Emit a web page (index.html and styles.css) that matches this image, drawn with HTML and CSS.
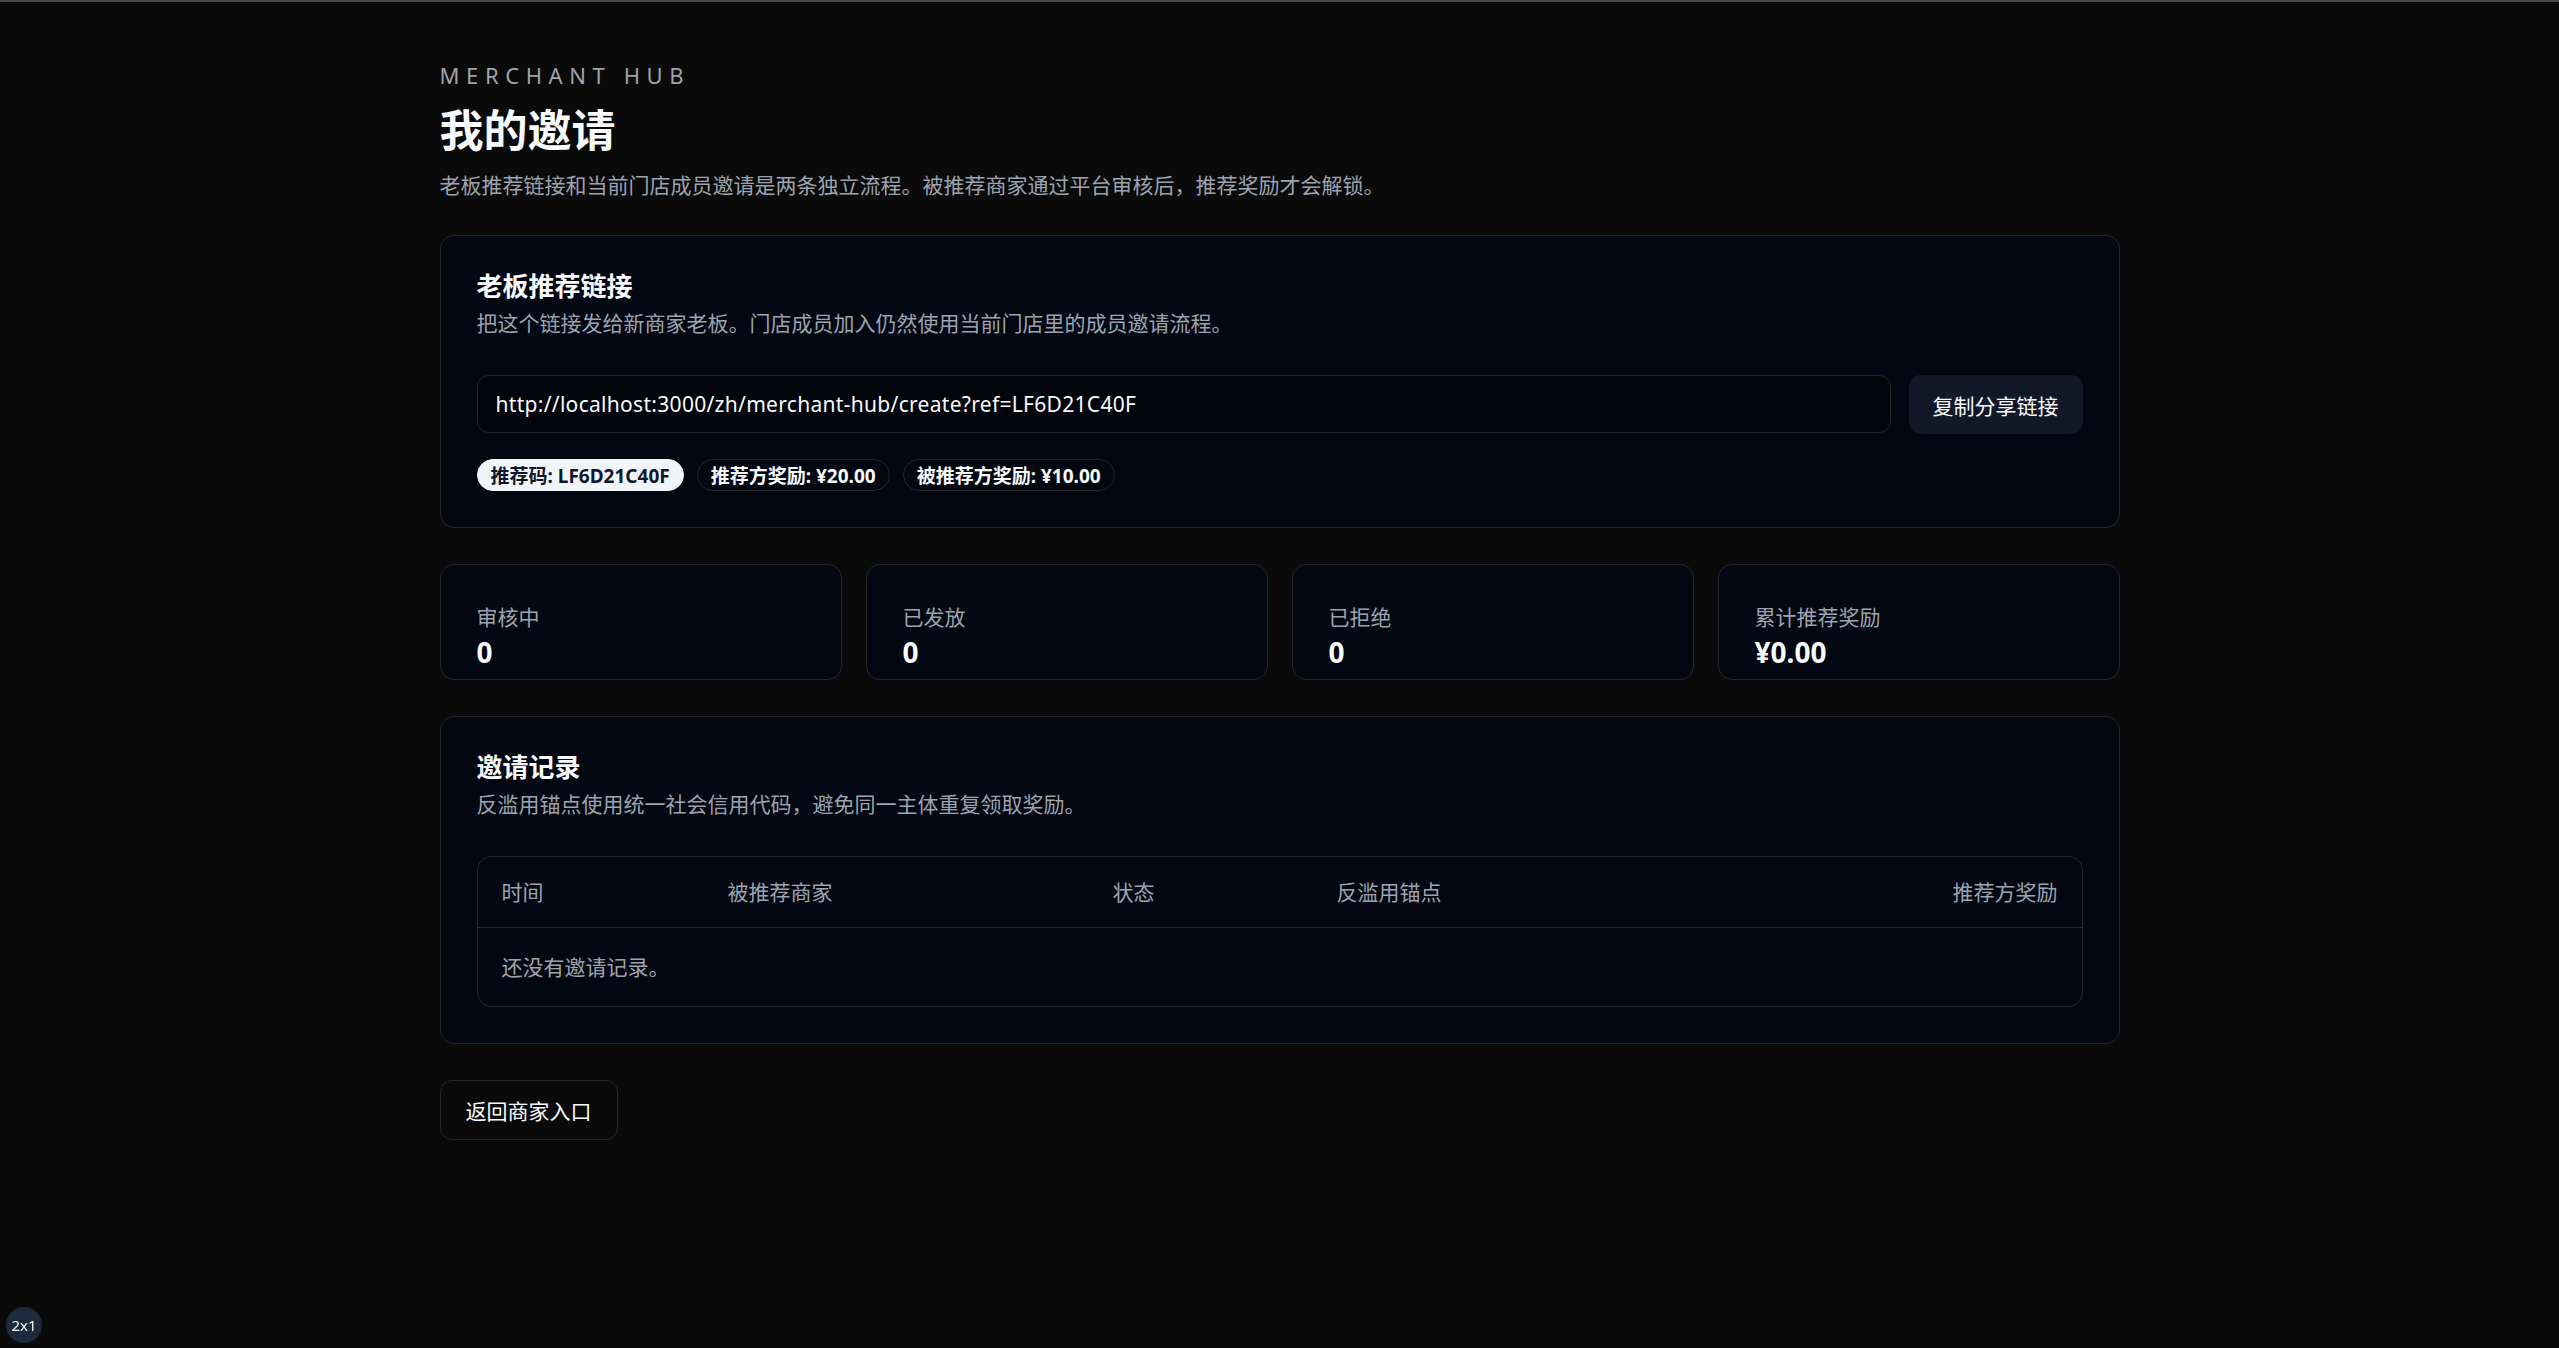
FILE: index.html
```html
<!DOCTYPE html>
<html lang="zh">

<head>
  <meta charset="utf-8">
  <title>我的邀请</title>
  <link rel="stylesheet" href="styles.css">
</head>

<body>
  <main class="page">
    <header class="page-head">
      <p class="eyebrow">MERCHANT HUB</p>
      <h1 class="page-title">我的邀请</h1>
      <p class="page-desc">老板推荐链接和当前门店成员邀请是两条独立流程。被推荐商家通过平台审核后，推荐奖励才会解锁。</p>
    </header>

    <section class="card">
      <h2 class="card-title">老板推荐链接</h2>
      <p class="card-desc">把这个链接发给新商家老板。门店成员加入仍然使用当前门店里的成员邀请流程。</p>
      <div class="link-row">
        <input class="link-input" type="text" readonly value="http://localhost:3000/zh/merchant-hub/create?ref=LF6D21C40F">
        <button class="btn-solid" type="button">复制分享链接</button>
      </div>
      <div class="badges">
        <span class="badge badge-light">推荐码: LF6D21C40F</span>
        <span class="badge">推荐方奖励: ¥20.00</span>
        <span class="badge">被推荐方奖励: ¥10.00</span>
      </div>
    </section>

    <div class="stats">
      <div class="stat">
        <p class="stat-label">审核中</p>
        <p class="stat-value">0</p>
      </div>
      <div class="stat">
        <p class="stat-label">已发放</p>
        <p class="stat-value">0</p>
      </div>
      <div class="stat">
        <p class="stat-label">已拒绝</p>
        <p class="stat-value">0</p>
      </div>
      <div class="stat">
        <p class="stat-label">累计推荐奖励</p>
        <p class="stat-value">¥0.00</p>
      </div>
    </div>

    <section class="card">
      <h2 class="card-title">邀请记录</h2>
      <p class="card-desc">反滥用锚点使用统一社会信用代码，避免同一主体重复领取奖励。</p>
      <div class="table-wrap">
        <table class="records">
          <colgroup>
            <col class="col-time">
            <col class="col-merchant">
            <col class="col-status">
            <col class="col-anchor">
            <col>
          </colgroup>
          <thead>
            <tr>
              <th>时间</th>
              <th>被推荐商家</th>
              <th>状态</th>
              <th>反滥用锚点</th>
              <th class="num">推荐方奖励</th>
            </tr>
          </thead>
          <tbody>
            <tr>
              <td colspan="5" class="empty">还没有邀请记录。</td>
            </tr>
          </tbody>
        </table>
      </div>
    </section>

    <a class="btn-outline" href="#">返回商家入口</a>
  </main>

  <div class="dev-badge">2x1</div>
</body>

</html>
```

FILE: styles.css
```css
* {
  margin: 0;
  padding: 0;
  box-sizing: border-box;
}

body {
  background-color: #0a0a0b;
  border-top: 2px solid #48454f;
  color: #f8fafc;
  font-family: "Noto Sans", "Noto Sans CJK SC", sans-serif;
  font-size: 21px;
  min-height: 100vh;
}

.page {
  max-width: 1680px;
  margin: 0 auto;
  padding: 59px 0 80px;
  display: flex;
  flex-direction: column;
  align-items: stretch;
  gap: 36px;
}

.eyebrow {
  font-size: 22px;
  line-height: 28px;
  letter-spacing: 0.3em;
  color: #a1a1aa;
}

.page-title {
  margin-top: 15px;
  font-size: 44px;
  line-height: 53px;
  font-weight: 700;
}

.page-desc {
  margin-top: 14px;
  line-height: 28px;
  color: #9ca3af;
}

.card {
  background-color: #030712;
  border: 1px solid #27272a;
  border-radius: 14px;
  padding: 36px;
}

.card-title {
  font-size: 26px;
  line-height: 28px;
  font-weight: 700;
}

.card-desc {
  margin-top: 7px;
  line-height: 32px;
  color: #9ca3af;
}

.link-row {
  margin-top: 36px;
  display: flex;
  gap: 18px;
}

.link-input {
  flex: 1;
  height: 58px;
  padding: 0 18px;
  background-color: #02040b;
  border: 1px solid #27272a;
  border-radius: 12px;
  color: #f8fafc;
  font-family: inherit;
  font-size: 21px;
  letter-spacing: 0.3px;
  outline: none;
}

.btn-solid {
  height: 59px;
  padding: 0 24px;
  background-color: #111827;
  border: none;
  border-radius: 12px;
  color: #f8fafc;
  font-family: inherit;
  font-size: 21px;
}

.badges {
  margin-top: 25px;
  display: flex;
  gap: 13px;
}

.badge {
  height: 32px;
  padding: 0 13px;
  display: flex;
  align-items: center;
  border: 1px solid #27272a;
  border-radius: 999px;
  font-size: 19px;
  font-weight: 700;
  color: #f8fafc;
}

.badge-light {
  background-color: #f1f5f9;
  border-color: #f1f5f9;
  color: #0f172a;
}

.stats {
  display: grid;
  grid-template-columns: repeat(4, 1fr);
  gap: 24px;
}

.stat {
  background-color: #030712;
  border: 1px solid #27272a;
  border-radius: 14px;
  padding: 36px 36px 11px;
}

.stat-label {
  line-height: 32px;
  color: #9ca3af;
}

.stat-value {
  margin-top: 3px;
  font-size: 28px;
  line-height: 32px;
  font-weight: 700;
}

.table-wrap {
  margin-top: 36px;
  border: 1px solid #27272a;
  border-radius: 14px;
  overflow: hidden;
}

.records {
  width: 100%;
  border-collapse: collapse;
  table-layout: fixed;
}

.col-time {
  width: 226px;
}

.col-merchant {
  width: 385px;
}

.col-status {
  width: 224px;
}

.col-anchor {
  width: 500px;
}

.records th {
  padding: 20px 24px;
  line-height: 30px;
  font-weight: 400;
  text-align: left;
  color: #9ca3af;
  border-bottom: 1px solid #27272a;
}

.records th.num {
  text-align: right;
}

.records td.empty {
  padding: 24px;
  line-height: 30px;
  color: #a1a1aa;
}

.btn-outline {
  align-self: flex-start;
  height: 60px;
  padding: 0 25px;
  display: flex;
  align-items: center;
  border: 1px solid #27272a;
  border-radius: 12px;
  color: #f8fafc;
  text-decoration: none;
}

.dev-badge {
  position: fixed;
  left: 6px;
  bottom: 5px;
  width: 36px;
  height: 36px;
  border-radius: 50%;
  background-color: #1e293b;
  color: #f1f5f9;
  font-size: 15px;
  display: flex;
  align-items: center;
  justify-content: center;
}
```
